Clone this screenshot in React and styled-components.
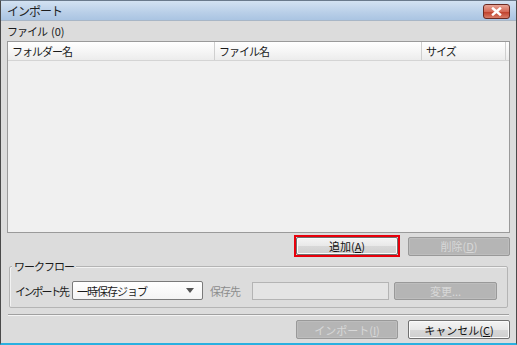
import React from 'react';
import styled, { createGlobalStyle } from 'styled-components';

const Global = createGlobalStyle`
  html, body { margin: 0; padding: 0; background: #dcdcdc; }
  * { box-sizing: border-box; }
  body {
    font-family: "Noto Sans CJK JP", "Noto Sans", sans-serif;
    font-size: 11px;
    letter-spacing: -1px;
    color: #1a1a1a;
  }
`;

const Window = styled.div`
  width: 517px;
  height: 345px;
  display: flex;
  flex-direction: column;
  background: #dcdcdc;
  border-left: 1px solid #4a4a4a;
  border-right: 1px solid #4a4a4a;
  border-top: 1px solid #6a7a8c;
  border-bottom: 2px solid #2ab0e0;
`;

const TitleBar = styled.div`
  height: 20px;
  flex: none;
  display: flex;
  align-items: center;
  justify-content: space-between;
  padding: 0 6px 0 6px;
  background: linear-gradient(#d3e2f2, #b9cfe8 60%, #aac4e2);
  border-bottom: 1px solid #a8b6c6;
  font-size: 12px;
  color: #1e1e1e;
`;

const CloseBtn = styled.div`
  width: 27px;
  height: 15px;
  margin-top: 1px;
  border: 1px solid #6b2a22;
  border-radius: 3px;
  background: linear-gradient(#e8a496, #d46a58 50%, #c0412c 55%, #d77c68);
  display: flex;
  align-items: center;
  justify-content: center;
`;

const Body = styled.div`
  flex: 1;
  display: flex;
  flex-direction: column;
  padding: 0 6px;
`;

const Label = styled.div`
  height: 20px;
  display: flex;
  align-items: center;
  & span { margin-left: 4px; letter-spacing: 0; }
`;

const Table = styled.div`
  height: 192px;
  display: flex;
  flex-direction: column;
  border: 1px solid #9a9a9a;
  background: #f0f0f0;
`;

const HeadRow = styled.div`
  display: grid;
  grid-template-columns: 207px 207px 84px 1fr;
  height: 19px;
  background: linear-gradient(#ffffff, #f6f6f6 50%, #ececec);
  border-bottom: 1px solid #d4d4d4;
`;

const HeadCell = styled.div`
  display: flex;
  align-items: center;
  padding-left: 4px;
  border-right: 1px solid #cfcfcf;
  &:last-child { border-right: none; }
`;

const ButtonRow = styled.div`
  display: flex;
  justify-content: flex-end;
  align-items: center;
  gap: ${p => p.$gap || 8}px;
  margin-top: ${p => p.$top || 0}px;
  height: ${p => p.$h || 22}px;
`;

const Focus = styled.div`
  border: 2px solid #e8000b;
  display: flex;
`;

const Button = styled.div`
  flex: none;
  width: ${p => p.$w || 102}px;
  height: ${p => p.$h || 19}px;
  display: flex;
  align-items: center;
  justify-content: center;
  border: 1px solid ${p => (p.$disabled ? '#999999' : '#707070')};
  border-radius: 2px;
  background: ${p => (p.$disabled ? '#b5b5b5' : 'linear-gradient(#f4f4f4, #e8e8e8 50%, #d8d8d8 52%, #cfcfcf)')};
  color: ${p => (p.$disabled ? '#d8d8d8' : '#111')};
  box-shadow: inset 0 0 0 1px ${p => (p.$disabled ? '#bdbdbd' : '#fbfbfb')};
  letter-spacing: 0;
  & u { text-decoration: underline; }
`;

const Group = styled.div`
  position: relative;
  margin: 9px 2px 0 2px;
  padding: 14px 6px 0 5px;
  height: 42px;
  border: 1px solid #b4b4b4;
  border-radius: 2px;
  box-shadow: inset 1px 1px 0 #f2f2f2;
`;

const Legend = styled.span`
  position: absolute;
  top: -8px;
  left: 2px;
  padding: 0 2px;
  background: #dcdcdc;
  line-height: 14px;
`;

const FieldRow = styled.div`
  display: flex;
  align-items: center;
  height: 19px;
`;

const FieldLabel = styled.span`
  flex: none;
  width: ${p => p.$w}px;
  white-space: nowrap;
  letter-spacing: ${p => p.$ls || -1}px;
  color: ${p => (p.$disabled ? '#8c8c8c' : '#1a1a1a')};
`;

const Select = styled.div`
  flex: none;
  width: 131px;
  height: 19px;
  display: flex;
  align-items: center;
  justify-content: space-between;
  padding: 0 8px 0 4px;
  border: 1px solid #7a7a7a;
  border-radius: 2px;
  background: linear-gradient(#ffffff, #f4f4f4);
  margin-right: 7px;
`;

const Arrow = styled.span`
  width: 0;
  height: 0;
  border-left: 4px solid transparent;
  border-right: 4px solid transparent;
  border-top: 5px solid #555;
`;

const TextBox = styled.div`
  flex: none;
  width: 137px;
  height: 18px;
  border: 1px solid #b4b4b4;
  background: #e4e4e4;
  margin-right: 5px;
`;

const Separator = styled.div`
  margin: 6px 1px 0 1px;
  height: 2px;
  border-top: 1px solid #a0a0a0;
  border-bottom: 1px solid #f4f4f4;
`;

export default function App() {
  return (
    <Window>
      <Global />
      <TitleBar>
        <span>インポート</span>
        <CloseBtn>
          <svg width="11" height="9" viewBox="0 0 11 9">
            <path d="M2 1.5 L9 7.5 M9 1.5 L2 7.5" stroke="#fff" strokeWidth="2.4" strokeLinecap="square" />
          </svg>
        </CloseBtn>
      </TitleBar>
      <Body>
        <Label>ファイル<span>(0)</span></Label>
        <Table>
          <HeadRow>
            <HeadCell>フォルダー名</HeadCell>
            <HeadCell>ファイル名</HeadCell>
            <HeadCell>サイズ</HeadCell>
            <HeadCell />
          </HeadRow>
        </Table>
        <ButtonRow $top={2} $gap={8}>
          <Focus>
            <Button $w={102} $h={18}>追加(<u>A</u>)</Button>
          </Focus>
          <Button $disabled $w={102}>削除(<u>D</u>)</Button>
        </ButtonRow>
        <Group>
          <Legend>ワークフロー</Legend>
          <FieldRow>
            <FieldLabel $w={57} $ls={-2.2}>インポート先</FieldLabel>
            <Select>
              <span>一時保存ジョブ</span>
              <Arrow />
            </Select>
            <FieldLabel $disabled $w={42}>保存先</FieldLabel>
            <TextBox />
            <Button $disabled $w={103} $h={18}>変更...</Button>
          </FieldRow>
        </Group>
        <Separator />
        <ButtonRow $top={4} $gap={10} $h={19}>
          <Button $disabled $w={102}>インポート(<u>I</u>)</Button>
          <Button $w={102}>キャンセル(<u>C</u>)</Button>
        </ButtonRow>
      </Body>
    </Window>
  );
}
